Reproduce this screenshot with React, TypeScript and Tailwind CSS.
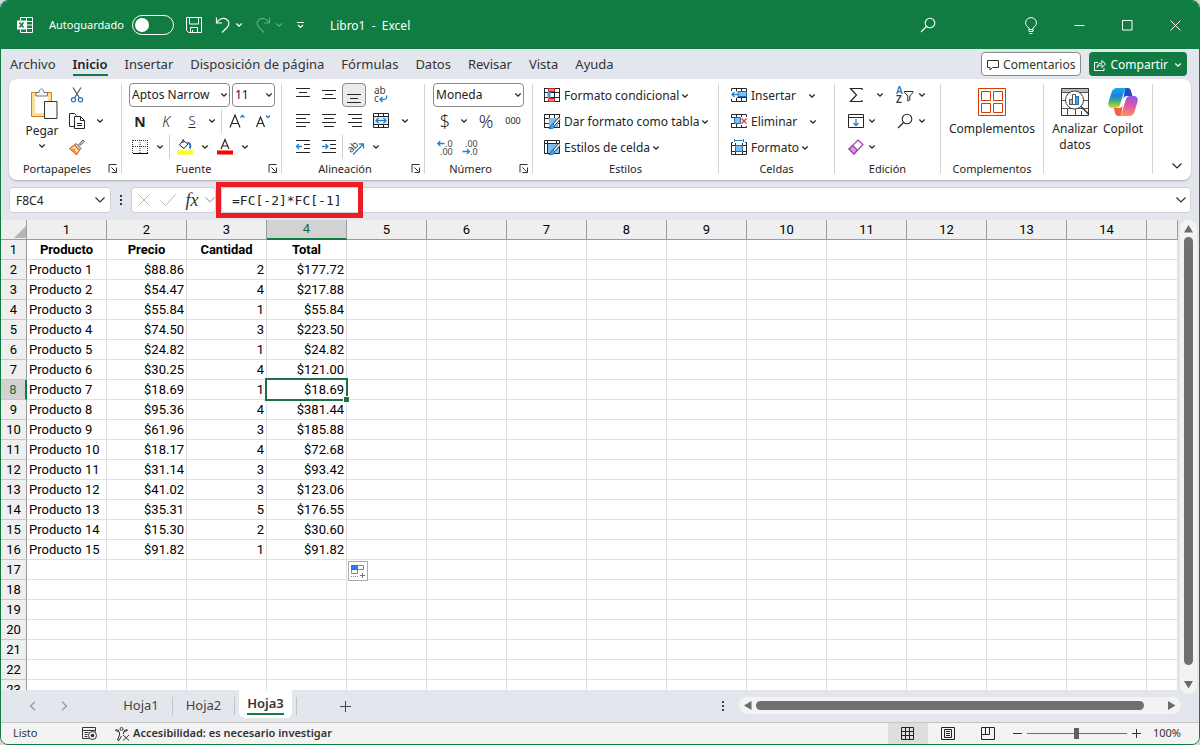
import { useState, type ReactNode } from 'react';

const TABS = ['Archivo', 'Inicio', 'Insertar', 'Disposición de página', 'Fórmulas', 'Datos', 'Revisar', 'Vista', 'Ayuda'];

const HEADERS = ['Producto', 'Precio', 'Cantidad', 'Total'];

const PRODUCTS: ReadonlyArray<ReadonlyArray<string>> = [
  ['$88.86', '2', '$177.72'],
  ['$54.47', '4', '$217.88'],
  ['$55.84', '1', '$55.84'],
  ['$74.50', '3', '$223.50'],
  ['$24.82', '1', '$24.82'],
  ['$30.25', '4', '$121.00'],
  ['$18.69', '1', '$18.69'],
  ['$95.36', '4', '$381.44'],
  ['$61.96', '3', '$185.88'],
  ['$18.17', '4', '$72.68'],
  ['$31.14', '3', '$93.42'],
  ['$41.02', '3', '$123.06'],
  ['$35.31', '5', '$176.55'],
  ['$15.30', '2', '$30.60'],
  ['$91.82', '1', '$91.82'],
];

const ROW_COUNT = 23;
const COL_COUNT = 15;
const ACTIVE = { row: 8, col: 4 };

/* ---------- icons ---------- */

interface SvgProps {
  size?: number;
  w?: number;
  h?: number;
  className?: string;
  children: ReactNode;
}

function Svg({ size = 16, w, h, className = '', children }: SvgProps) {
  const width = w ?? size;
  const height = h ?? size;
  return (
    <svg
      width={width}
      height={height}
      viewBox={`0 0 ${width} ${height}`}
      fill="none"
      stroke="currentColor"
      className={`shrink-0 overflow-visible ${className}`}
      aria-hidden="true"
    >
      {children}
    </svg>
  );
}

function Chevron({ className = '' }: { className?: string }) {
  return (
    <Svg w={8} h={6} className={className}>
      <path d="M1.3 1.5 4 4.2 6.7 1.5" strokeWidth="1.3" />
    </Svg>
  );
}

function BigChevron({ className = '' }: { className?: string }) {
  return (
    <Svg w={12} h={8} className={className}>
      <path d="M1.5 1.5 6 6l4.5-4.5" strokeWidth="1.2" />
    </Svg>
  );
}

function Lines({ rows }: { rows: ReadonlyArray<[number, number, number]> }) {
  return (
    <Svg>
      {rows.map(([x1, x2, y]) => (
        <path key={y} d={`M${x1} ${y + 0.5}H${x2}`} />
      ))}
    </Svg>
  );
}

const AlignTop = () => <Lines rows={[[1, 15, 1], [4, 12, 5], [1, 15, 9]]} />;
const AlignMiddle = () => <Lines rows={[[1, 15, 3], [4, 12, 7], [1, 15, 11]]} />;
const AlignBottom = () => <Lines rows={[[1, 15, 7], [4, 12, 11], [1, 15, 15]]} />;
const AlignLeft = () => <Lines rows={[[1, 15, 1], [1, 11, 5], [1, 15, 9], [1, 11, 13]]} />;
const AlignCenter = () => <Lines rows={[[1, 15, 1], [3, 13, 5], [1, 15, 9], [3, 13, 13]]} />;
const AlignRight = () => <Lines rows={[[1, 15, 1], [5, 15, 5], [1, 15, 9], [5, 15, 13]]} />;

function Indent({ inward = false }: { inward?: boolean }) {
  return (
    <Svg>
      <path d="M1 1.5h14M9 5.5h6M9 9.5h6M1 13.5h14" />
      <path d={inward ? 'M1 7.5h6M4.5 5 7 7.5 4.5 10' : 'M7 7.5H1.5M4 5 1.5 7.5 4 10'} stroke="#1e88d2" strokeWidth="1.3" />
    </Svg>
  );
}

function WrapText() {
  return (
    <Svg w={16} h={18}>
      <text x="1" y="8" fontSize="10" fill="#444" stroke="none" fontFamily="Noto Sans, sans-serif">ab</text>
      <text x="1" y="16" fontSize="10" fill="#444" stroke="none" fontFamily="Noto Sans, sans-serif">c</text>
      <path d="M13.5 9.5c1 3-1 4-3 4H7M9.5 11 7 13.5 9.5 16" stroke="#1e88d2" strokeWidth="1.4" />
    </Svg>
  );
}

function MergeCells() {
  return (
    <Svg>
      <path d="M.5.5h15v14H.5zM5.5.5v3M10.5.5v3M5.5 11.5v3M10.5 11.5v3M.5 3.5h15M.5 11.5h15" />
      <path d="M1 4h14v7H1z" fill="#d9ecfa" stroke="none" />
      <path d="M3 7.5h10M5.5 5 3 7.5 5.5 10M10.5 5 13 7.5 10.5 10" stroke="#1e78c8" strokeWidth="1.2" />
    </Svg>
  );
}

function Orientation() {
  return (
    <Svg w={18} h={16}>
      <text x="0" y="11" fontSize="10" fill="#444" stroke="none" fontFamily="Noto Sans, sans-serif" transform="rotate(-45 6 8)">ab</text>
      <path d="M6 15.5 16 5.5M12 5h4.5v4.5" stroke="#1e88d2" strokeWidth="1.3" />
    </Svg>
  );
}

function Decimals({ more = false }: { more?: boolean }) {
  return (
    <Svg w={17} h={17}>
      <text x={more ? 8 : 3} y="8" fontSize="9" fill="#444" stroke="none" fontFamily="Noto Sans, sans-serif">{more ? '.0' : '.00'}</text>
      <text x={more ? 3 : 8} y="16" fontSize="9" fill="#444" stroke="none" fontFamily="Noto Sans, sans-serif">{more ? '.00' : '.0'}</text>
      <path d={more ? 'M7.5 4.5H.8M3.3 2 .8 4.5 3.3 7' : 'M.5 12.5h7M5 10l2.5 2.5L5 15'} stroke="#1e88d2" strokeWidth="1.3" />
    </Svg>
  );
}

function Paste() {
  return (
    <Svg w={28} h={32} className="ml-1">
      <path d="M1.5 4.5h20v24h-20z" fill="#fff" stroke="#e07b12" />
      <path d="M3.5 6.5h16v20h-16z" fill="#fff" stroke="#f8dfa0" strokeWidth="3" />
      <path d="M6 8V4.5h3C9 2.5 10 1 11.500 1S14 2.500 14 4.500h3.500V8z" fill="#f6f6f6" stroke="#777" />
      <path d="M14.500 13.500h12.500v17H14.500z" fill="#fbfbfb" stroke="#333" />
    </Svg>
  );
}

function Cut() {
  return (
    <Svg>
      <path d="M4 .5 10.5 11M12 .5 5.5 11" stroke="#555" strokeWidth="1.2" />
      <circle cx="4.5" cy="12.8" r="2.1" stroke="#1e78c8" strokeWidth="1.2" />
      <circle cx="11.5" cy="12.8" r="2.1" stroke="#1e78c8" strokeWidth="1.2" />
    </Svg>
  );
}

function Copy() {
  return (
    <Svg>
      <path d="M5 13.5H.5V.5h5l2 2" />
      <path d="M5.5 3.5h6l4 4v8h-10z" fill="#fff" />
      <path d="M11.5 3.5v4h4M8 10.5h5M8 12.5h5" />
    </Svg>
  );
}

function Painter() {
  return (
    <Svg>
      <path d="m9.5 6 4.500-5 1.500 1.500-5 4.500" stroke="#555" fill="#ddd" />
      <path d="M7 4.500 12 9.500 10.500 11 5.500 6z" fill="#eee" stroke="#555" />
      <path d="M5.500 6 10.500 11 7.500 15.500 .8 9.500z" fill="#fbe3c8" stroke="#dd6b10" strokeWidth="1.2" />
      <path d="m3 9.500 4.500 4M5 11l1.500-1" stroke="#dd6b10" />
    </Svg>
  );
}

function Borders() {
  return (
    <Svg>
      <path d="M.5 1v13M15.5 1v13M8 1v13M1 1.5h14M1 7.5h14" strokeDasharray="1 1" stroke="#333" />
      <path d="M1 14.5h15" stroke="#000" strokeWidth="1.2" />
    </Svg>
  );
}

function Fill() {
  return (
    <Svg>
      <path d="M6 1.5 2.5 6 7 9.5l4-4.5zM6 4V0" />
      <path d="M10.5 3.5c2.500.5 3.500 3 2.500 6" stroke="#1e78c8" strokeWidth="2" />
      <path d="M0 11.5h16v4H0z" fill="#ff0" stroke="none" />
    </Svg>
  );
}

function FontColor() {
  return (
    <Svg>
      <path d="M4 10 8 .5 12 10M5.2 7h5.6" strokeWidth="1.2" />
      <path d="M0 11.5h16v4H0z" fill="#f00" stroke="none" />
    </Svg>
  );
}

function FontSize({ up = false }: { up?: boolean }) {
  return (
    <Svg>
      <path d={up ? 'M1 14.5 6 2l5 12.500M2.700 10.500h6.600' : 'M1.5 14 5.500 4l4 10M3 10.500h5'} strokeWidth="1.2" />
      <path d={up ? 'm11.5 4.5 2-2.2 2 2.2' : 'm11 2.5 2 2.2 2-2.2'} stroke="#1e78c8" strokeWidth="1.2" />
    </Svg>
  );
}

const GRID_16 = 'M.5 1v13.5M5.5 1v13.5M10.5 1v13.5M15.5 1v13.5M0 1.5h16M0 5.5h16M0 10.5h16M0 14.5h16';

function CondFormat() {
  return (
    <Svg>
      <path d={GRID_16} />
      <path d="M4.5 1.5h6v3h-6zM4.5 11.5h6v3h-6z" fill="#f58a8a" stroke="#d81f1f" />
      <path d="M3.5 5h3v6h-3z" fill="#3d9be0" stroke="none" />
    </Svg>
  );
}

function Brush() {
  return (
    <>
      <path d="m15 4-6 7 1.5 1.5L16 6.5" fill="#fff" stroke="#333" />
      <path d="M9 11c-3 .5-1.500 3-4 4.500 3 .5 5.500 0 5.500-3z" fill="#4ba3e3" stroke="#1e6fb8" />
    </>
  );
}

function TableFormat() {
  return (
    <Svg>
      <path d={GRID_16} />
      <path d="M5 5h9v9H5z" fill="#7fbdec" stroke="none" />
      <Brush />
    </Svg>
  );
}

function CellStyles() {
  return (
    <Svg>
      <path d="M.5 1.5h15v13H.5zM.5 4.5h15M3.5 1.5v13M12.5 1.5v3" />
      <path d="M4 5h11v9H4z" fill="#7fbdec" stroke="none" />
      <Brush />
    </Svg>
  );
}

function InsertCells() {
  return (
    <Svg>
      <path d="M.5 4V1.5h15v13H.5V12M5.5 1.5v3M10.5 1.5v13M5.5 11v3.5M6 10.5h9" />
      <path d="M7 4.5h8.5v5H7z" fill="#7fbdec" stroke="#1e6fb8" />
      <path d="M7 7.5H1M3.5 5 1 7.5 3.5 10" stroke="#1e88d2" strokeWidth="1.4" />
    </Svg>
  );
}

function DeleteCells() {
  return (
    <Svg>
      <path d="M15.5 4V1.5H.5V4M.5 11v3.5h15V13M5.5 1.5V4M10.5 1.5V4M5.5 11v3.5M10.5 12v2.5M0 4.5h4M0 10.5h4" />
      <path d="M3.5 4.5h6v6h-6z" fill="#7fbdec" stroke="#1e6fb8" />
      <path d="m10.5 5.5 5 5M15.5 5.5l-5 5" stroke="#e03a3a" strokeWidth="1.4" />
    </Svg>
  );
}

function FormatCells() {
  return (
    <Svg>
      <path d="M2 3.5H.5v12h15v-12H14M4.5 4v11.5M11.5 4v11.5M.5 6.5h15M.5 12.5h15" />
      <path d="M4.5 6.5h7v6h-7z" fill="#7fbdec" stroke="#1e6fb8" />
      <path d="M3.5 0v3M12.5 0v3M3.5 1.5h9" stroke="#1e88d2" />
    </Svg>
  );
}

function Sigma() {
  return (
    <Svg>
      <path d="M14 3V1.5H2.5l6 6.5-6 6.5H14V13" strokeWidth="1.2" />
    </Svg>
  );
}

function SortFilter() {
  return (
    <Svg w={18} h={18}>
      <text x="0" y="8" fontSize="10" fontWeight="600" fill="#1e78c8" stroke="none" fontFamily="Noto Sans, sans-serif">A</text>
      <text x="0" y="17" fontSize="10" fontWeight="600" fill="#333" stroke="none" fontFamily="Noto Sans, sans-serif">Z</text>
      <path d="M8.5 5.5H17v1L13.800 10v4l-2 1v-5L8.500 6.500z" />
    </Svg>
  );
}

function FillDown() {
  return (
    <Svg>
      <path d="M.5 1.5h15v13H.5zM.5 4.5h15" />
      <path d="M8 6v6.5M5.5 10 8 12.5l2.500-2.500" stroke="#1e88d2" strokeWidth="1.3" />
    </Svg>
  );
}

function Magnifier() {
  return (
    <Svg>
      <circle cx="10" cy="6" r="4.8" strokeWidth="1.1" />
      <path d="M6.5 9.5 1 15" strokeWidth="1.2" />
    </Svg>
  );
}

function Eraser() {
  return (
    <Svg>
      <path d="M10 1 15 5.500 6 15 1 10z" fill="#fff" stroke="#a23fb0" strokeWidth="1.2" />
      <path d="M4.500 6.500 9.500 11 6 15 1 10z" fill="#d79bdf" stroke="#a23fb0" strokeWidth="1.2" />
    </Svg>
  );
}

function AddIns() {
  return (
    <Svg size={28}>
      <path d="M.5.5h27v27H.5zM3.5 3.5h9v9h-9zM15.5 3.5h9v9h-9zM3.5 15.5h9v9h-9zM15.5 15.5h9v9h-9z" stroke="#d83b01" />
    </Svg>
  );
}

function Analyze() {
  return (
    <Svg size={28}>
      <path d="M.5.5h27v27H.5z" fill="#fafafa" stroke="#333" />
      <path d="M1 1h26v3H1z" fill="#bbb" stroke="none" />
      <path d="M.5 4.5h27M.5 12.5h5M22 12.5h5.5M.5 20.5h27M6.5 20.5v7M14.5 21v6.5M20.5 23v4.5" stroke="#555" />
      <circle cx="13.5" cy="12" r="9" fill="#fff" stroke="#444" />
      <path d="M8.5 11.5h3v5h-3z" fill="#bbb" stroke="#555" />
      <path d="M11.5 6.5h3v10h-3z" fill="#fff" stroke="#555" />
      <path d="M14.5 8.5h3v8h-3z" fill="#4ba3e3" stroke="#1e6fb8" />
      <path d="m20 18.5 8 8" stroke="#333" strokeWidth="1.5" />
    </Svg>
  );
}

function Copilot() {
  return (
    <Svg w={30} h={28}>
      <defs>
        <linearGradient id="cpA" x1="0" y1="0" x2="0" y2="1">
          <stop offset="0" stopColor="#1ba8f0" />
          <stop offset=".4" stopColor="#1d7fe0" />
          <stop offset=".65" stopColor="#3bb27a" />
          <stop offset="1" stopColor="#e8d21c" />
        </linearGradient>
        <linearGradient id="cpB" x1=".5" y1="0" x2=".3" y2="1">
          <stop offset="0" stopColor="#9a55e8" />
          <stop offset=".45" stopColor="#e055a8" />
          <stop offset="1" stopColor="#ff9a50" />
        </linearGradient>
      </defs>
      <path d="M17 0h3c1.500 0 2.500 1 3 3l1.500 5H19c-2 0-3 1-3.700 3z" fill="#1a4fc8" stroke="none" />
      <path d="M9 0h10.500c-2 0-2.800 1.500-3.400 3.500L12 17c-.7 2-1.800 3-4 3H4.500C1 20-.5 17.500.5 14L3.500 4.500C4.500 1.500 6 0 9 0z" fill="url(#cpA)" stroke="none" />
      <path d="M13 28h-3c-1.500 0-2.500-1-3-3l-1.200-5H11c2 0 3-1 3.700-3z" fill="#f0604a" stroke="none" />
      <path d="M21 28H10.500c2 0 2.800-1.500 3.400-3.500L18 11c.7-2 1.800-3 4-3h3.500c3.500 0 5 2.500 4 6l-3 9.500c-1 3-2.500 4.500-5.500 4.500z" fill="url(#cpB)" stroke="none" />
    </Svg>
  );
}

function ExcelMark() {
  return (
    <Svg>
      <path d="M3.5 3.5v-3h12v15h-12v-3M9.5.5v15M9 4.5h6.5M9 8h6.5M9 11.5h6.5" />
      <path d="M0 3.5h9v9H0z" fill="#fff" stroke="none" />
      <path d="m2.5 5.5 4 5M6.5 5.5l-4 5" stroke="#107c41" strokeWidth="1.5" />
    </Svg>
  );
}

function Save() {
  return (
    <Svg>
      <path d="M.5.5h15v15h-13l-2-2zM3.5.5V7h9V.5M4.5 15.5v-5h7v5M6.5 13v2.5" />
    </Svg>
  );
}

function Undo({ flip = false }: { flip?: boolean }) {
  return (
    <Svg className={flip ? '-scale-x-100' : ''}>
      <path d="M1.5.5V6H7M1.5 6C4 2 8 0 11.5 2.2c3 2 3 5.500 1 7.800L7 15.500" strokeWidth="1.2" />
    </Svg>
  );
}

function Launcher() {
  return (
    <Svg size={9}>
      <path d="M1 8.5V.5h7.5M3.5 3.5l4 4M8.5 3.5v5h-5" stroke="#333" />
    </Svg>
  );
}

/* ---------- ribbon parts ---------- */

interface IconBtnProps {
  label: string;
  className?: string;
  children: ReactNode;
}

function IconBtn({ label, className = 'w-[26px]', children }: IconBtnProps) {
  return (
    <button type="button" aria-label={label} className={`flex h-6 shrink-0 items-center justify-center ${className}`}>
      {children}
    </button>
  );
}

function Drop({ label, className = '' }: { label: string; className?: string }) {
  return (
    <button type="button" aria-label={label} className={`flex h-6 w-[14px] shrink-0 items-center justify-center ${className}`}>
      <Chevron />
    </button>
  );
}

function Divider() {
  return <span className="mx-[2px] h-6 w-px bg-[#d0d0d0]" />;
}

function Row({ children, className = '' }: { children: ReactNode; className?: string }) {
  return <div className={`flex h-[26px] items-center ${className}`}>{children}</div>;
}

interface GroupProps {
  title?: string;
  width: string;
  launcher?: boolean;
  children: ReactNode;
}

function Group({ title, width, launcher, children }: GroupProps) {
  return (
    <section aria-label={title} className={`relative flex shrink-0 flex-col border-r border-[#d4d4d4] ${width}`}>
      <div className="h-[77px] shrink-0">{children}</div>
      {title && <div className={`text-center text-[11px] leading-4 ${launcher ? 'pr-4' : ''}`}>{title}</div>}
      {launcher && (
        <button type="button" aria-label={`Opciones de ${title}`} className="absolute right-[3px] bottom-0 flex h-3 w-3 items-center justify-center">
          <Launcher />
        </button>
      )}
    </section>
  );
}

function Combo({ label, value, width }: { label: string; value: string; width: string }) {
  return (
    <div className={`relative flex h-6 items-center ${width}`}>
      <select aria-label={label} className="h-6 w-full appearance-none rounded border border-[#8a8a8a] bg-white pl-[2px] text-[12px] leading-5 text-[#222]">
        <option>{value}</option>
      </select>
      <Chevron className="pointer-events-none absolute right-[2px]" />
    </div>
  );
}

function MenuBtn({ icon, label, gap = 'gap-[2px]' }: { icon: ReactNode; label: string; gap?: string }) {
  return (
    <button type="button" className="flex h-6 items-center gap-1 text-[12px] whitespace-nowrap">
      {icon}
      <span className={`flex items-center pt-px ${gap}`}>
        {label}
        <Chevron />
      </span>
    </button>
  );
}

function Ribbon() {
  return (
    <div className="mx-2 flex h-[101px] shrink-0 overflow-hidden rounded-lg bg-white pt-[5px] pb-[6px] text-[#262626] shadow-[0_1px_2px_rgba(0,0,0,0.25)]">
      <Group title="Portapapeles" width="w-[113px]" launcher>
        <div className="flex pl-[10px]">
          <button type="button" className="flex w-[46px] flex-col items-center pt-1 text-[12px]">
            <Paste />
            <span className="pt-px leading-5">Pegar</span>
            <Chevron className="mt-[2px]" />
          </button>
          <div className="-mt-[2px]">
            <Row><IconBtn label="Cortar" className="w-6"><Cut /></IconBtn></Row>
            <Row><IconBtn label="Copiar" className="w-6"><Copy /></IconBtn><Drop label="Opciones de copia" className="ml-1" /></Row>
            <Row><IconBtn label="Copiar formato" className="w-6"><Painter /></IconBtn></Row>
          </div>
        </div>
      </Group>

      <Group title="Fuente" width="w-[160px]" launcher>
        <div className="-mt-[2px] pl-[5px]">
          <Row className="gap-[2px] pl-[2px]">
            <Combo label="Fuente" value="Aptos Narrow" width="w-[101px]" />
            <Combo label="Tamaño de fuente" value="11" width="w-[43px]" />
          </Row>
          <Row>
            <IconBtn label="Negrita"><span className="text-[14px] font-bold">N</span></IconBtn>
            <IconBtn label="Cursiva"><span className="text-[14px] font-light italic">K</span></IconBtn>
            <IconBtn label="Subrayado"><span className="text-[13px] font-light underline underline-offset-2">S</span></IconBtn>
            <Drop label="Estilos de subrayado" />
            <Divider />
            <IconBtn label="Aumentar tamaño"><FontSize up /></IconBtn>
            <IconBtn label="Disminuir tamaño"><FontSize /></IconBtn>
          </Row>
          <Row>
            <IconBtn label="Bordes"><Borders /></IconBtn>
            <Drop label="Más bordes" />
            <Divider />
            <IconBtn label="Color de relleno"><Fill /></IconBtn>
            <Drop label="Más colores de relleno" />
            <IconBtn label="Color de fuente"><FontColor /></IconBtn>
            <Drop label="Más colores de fuente" />
          </Row>
        </div>
      </Group>

      <Group title="Alineación" width="w-[143px]" launcher>
        <div className="-mt-[2px] pl-2">
          <Row>
            <IconBtn label="Alinear arriba"><AlignTop /></IconBtn>
            <IconBtn label="Alinear en el medio"><AlignMiddle /></IconBtn>
            <IconBtn label="Alinear abajo" className="w-6 rounded border border-[#8a8a8a] bg-[#ebebeb]"><AlignBottom /></IconBtn>
            <IconBtn label="Ajustar texto" className="w-[30px]"><WrapText /></IconBtn>
          </Row>
          <Row>
            <IconBtn label="Alinear a la izquierda"><AlignLeft /></IconBtn>
            <IconBtn label="Centrar"><AlignCenter /></IconBtn>
            <IconBtn label="Alinear a la derecha"><AlignRight /></IconBtn>
            <IconBtn label="Combinar y centrar"><MergeCells /></IconBtn>
            <Drop label="Opciones de combinar" className="ml-1" />
          </Row>
          <Row>
            <IconBtn label="Disminuir sangría"><Indent /></IconBtn>
            <IconBtn label="Aumentar sangría"><Indent inward /></IconBtn>
            <span className="h-6 w-px bg-[#d0d0d0]" />
            <IconBtn label="Orientación"><Orientation /></IconBtn>
            <Drop label="Opciones de orientación" />
          </Row>
        </div>
      </Group>

      <Group title="Número" width="w-[108px]" launcher>
        <div className="-mt-[2px] pl-2">
          <Row><Combo label="Formato de número" value="Moneda" width="w-[91px]" /></Row>
          <Row>
            <IconBtn label="Formato de contabilidad" className="w-6"><span className="text-[18px] font-light">$</span></IconBtn>
            <Drop label="Más monedas" />
            <IconBtn label="Porcentaje" className="w-[30px]"><span className="text-[18px] font-light">%</span></IconBtn>
            <IconBtn label="Estilo millares" className="w-6"><span className="text-[9px]">000</span></IconBtn>
          </Row>
          <Row>
            <IconBtn label="Aumentar decimales" className="w-6"><Decimals more /></IconBtn>
            <IconBtn label="Disminuir decimales"><Decimals /></IconBtn>
          </Row>
        </div>
      </Group>

      <Group title="Estilos" width="w-[186px]">
        <div className="-mt-[2px] pl-[11px]">
          <Row><MenuBtn icon={<CondFormat />} label="Formato condicional" /></Row>
          <Row><MenuBtn icon={<TableFormat />} label="Dar formato como tabla" /></Row>
          <Row><MenuBtn icon={<CellStyles />} label="Estilos de celda" /></Row>
        </div>
      </Group>

      <Group title="Celdas" width="w-[116px]">
        <div className="-mt-[2px] pl-3">
          <Row><MenuBtn icon={<InsertCells />} label="Insertar" gap="gap-3" /></Row>
          <Row><MenuBtn icon={<DeleteCells />} label="Eliminar" gap="gap-3" /></Row>
          <Row><MenuBtn icon={<FormatCells />} label="Formato" /></Row>
        </div>
      </Group>

      <Group title="Edición" width="w-[106px]">
        <div className="-mt-[2px] pl-2">
          <Row>
            <IconBtn label="Autosuma"><Sigma /></IconBtn>
            <Drop label="Más funciones" className="ml-1" />
            <IconBtn label="Ordenar y filtrar" className="ml-2 w-5"><SortFilter /></IconBtn>
            <Drop label="Opciones de orden" />
          </Row>
          <Row>
            <IconBtn label="Rellenar"><FillDown /></IconBtn>
            <Drop label="Opciones de relleno" className="-ml-1" />
            <IconBtn label="Buscar y seleccionar" className="ml-4 w-5"><Magnifier /></IconBtn>
            <Drop label="Opciones de búsqueda" />
          </Row>
          <Row>
            <IconBtn label="Borrar"><Eraser /></IconBtn>
            <Drop label="Opciones de borrado" className="-ml-1" />
          </Row>
        </div>
      </Group>

      <Group title="Complementos" width="w-[103px]">
        <button type="button" className="flex w-full flex-col items-center gap-[5px] pt-1 text-[12px] leading-4">
          <AddIns />
          Complementos
        </button>
      </Group>

      <Group width="w-[109px]">
        <div className="flex items-start pl-[7px]">
          <button type="button" className="flex w-12 flex-col items-center gap-[5px] pt-1 text-[12px] leading-4">
            <Analyze />
            Analizar datos
          </button>
          <button type="button" className="flex w-12 flex-col items-center gap-[5px] pt-1 text-[12px] leading-4">
            <Copilot />
            Copilot
          </button>
        </div>
      </Group>

      <button type="button" aria-label="Contraer cinta" className="mr-2 ml-auto self-end pb-1">
        <BigChevron />
      </button>
    </div>
  );
}

/* ---------- window chrome ---------- */

function TitleBar() {
  return (
    <header className="flex h-12 shrink-0 items-center bg-[#107c41] pl-4 text-[12px] text-white">
      <ExcelMark />
      <label className="ml-4 flex items-center gap-2">
        <span className="text-[11px]">Autoguardado</span>
        <input type="checkbox" role="switch" className="peer sr-only" />
        <span className="flex h-5 w-[42px] items-center rounded-full border border-white px-[2px] peer-checked:justify-end">
          <span className="h-[14px] w-[14px] rounded-full bg-white" />
        </span>
      </label>
      <button type="button" aria-label="Guardar" className="ml-3"><Save /></button>
      <button type="button" aria-label="Deshacer" className="ml-[13px] flex items-center gap-1"><Undo /><Chevron /></button>
      <button type="button" aria-label="Rehacer" disabled className="ml-3 flex items-center gap-1 text-[#5aa981]"><Undo flip /><Chevron /></button>
      <button type="button" aria-label="Personalizar barra" className="ml-[13px]">
        <Svg w={9} h={8}>
          <path d="M1 1.5h7M2 4l2.5 2.5L7 4" strokeWidth="1.2" />
        </Svg>
      </button>
      <span className="ml-[25px] pt-[2px] whitespace-pre">Libro1  -  Excel</span>
      <div className="ml-auto flex items-center">
        <button type="button" aria-label="Buscar" className="mr-[55px] flex w-12 justify-center"><Magnifier /></button>
        <button type="button" aria-label="Sugerencias" className="flex w-12 items-center justify-center">
          <Svg w={12} h={17}>
            <path d="M4 12.5V11C2 9.5.6 8 .6 5.800a5.400 5.200 0 0 1 10.800 0C11.400 8 10 9.500 8 11v1.500zM4 12.500v2h4v-2M4.500 16.500h3" />
          </Svg>
        </button>
        <button type="button" aria-label="Minimizar" className="flex w-12 items-center justify-center">
          <Svg size={11}><path d="M.5 5.5h10" /></Svg>
        </button>
        <button type="button" aria-label="Maximizar" className="flex w-12 items-center justify-center">
          <Svg size={11}><path d="M.5.5H10V10H.5z" /></Svg>
        </button>
        <button type="button" aria-label="Cerrar" className="flex w-12 items-center justify-center">
          <Svg size={11}><path d="m.5.5 10 10M10.5.5l-10 10" /></Svg>
        </button>
      </div>
    </header>
  );
}

function TabBar() {
  return (
    <nav className="flex h-[30px] shrink-0 items-center pr-3 pl-[9px] text-[12px] text-[#333]">
      <div className="flex gap-[17px] text-[13px]">
        {TABS.map((tab) => (
          <button
            key={tab}
            type="button"
            className={
              tab === 'Inicio'
                ? 'border-b-2 border-[#107c41] pt-[2px] leading-5 font-semibold text-[#222]'
                : 'border-b-2 border-transparent pt-[2px] leading-5'
            }
          >
            {tab}
          </button>
        ))}
      </div>
      <div className="ml-auto flex gap-2">
        <button type="button" className="flex h-6 items-center gap-1 rounded border border-[#8a8a8a] bg-white px-[5px] pt-px">
          <Svg size={12}><path d="M.5 1.5h11v7h-6L3 11V8.5H.5z" /></Svg>
          Comentarios
        </button>
        <button type="button" className="flex h-6 items-center gap-1 rounded bg-[#107c41] px-[5px] pt-px text-white">
          <Svg size={12}>
            <path d="M4 3.5H.5v8H10V9M3 8.500c.5-3 2-4.500 5-4.500V1.500L11.500 5 8 8.500V6C6 6 4.500 6.500 3 8.500z" />
          </Svg>
          Compartir
          <Chevron className="ml-[2px]" />
        </button>
      </div>
    </nav>
  );
}

function FormulaBar() {
  const [formula, setFormula] = useState('=FC[-2]*FC[-1]');
  return (
    <div className="mt-[7px] flex h-[26px] shrink-0 items-center px-2">
      <div className="flex h-[26px] w-[102px] items-center rounded border border-[#d0d0d0] bg-white pr-1">
        <input aria-label="Cuadro de nombres" defaultValue="F8C4" className="w-full min-w-0 bg-transparent pt-px pl-[6px] text-[12px] text-[#222] outline-none" />
        <BigChevron />
      </div>
      <Svg w={20} h={12}><path d="M10 1v2M10 5v2M10 9v2" strokeWidth="2" /></Svg>
      <div className="flex h-[26px] w-[85px] items-center rounded border border-[#d0d0d0] bg-white text-[#b5b5b5]">
        <IconBtn label="Cancelar" className="w-6"><Svg size={12}><path d="m.5.5 11 11M11.5.5l-11 11" /></Svg></IconBtn>
        <IconBtn label="Introducir" className="w-6"><Svg w={16} h={12}><path d="m.5 6.5 5 5 10-11" /></Svg></IconBtn>
        <IconBtn label="Insertar función" className="w-6">
          <span className="font-['Liberation_Serif',serif] text-[18px] text-[#333] italic">fx</span>
        </IconBtn>
        <BigChevron />
      </div>
      <div className="relative ml-[5px] flex h-[26px] flex-1 items-center rounded border border-[#d0d0d0] bg-white pr-[3px]">
        <input
          aria-label="Barra de fórmulas"
          value={formula}
          onChange={(e) => setFormula(e.target.value)}
          className="w-full bg-transparent pt-px pl-[10px] font-['DejaVu_Sans_Mono',monospace] text-[13px] text-[#222] outline-none"
        />
        <BigChevron />
        <span className="pointer-events-none absolute -top-[6px] -left-[6px] h-9 w-[147px] border-[5px] border-[#ed1c24]" />
      </div>
    </div>
  );
}

/* ---------- sheet ---------- */

function cellText(row: number, col: number): string {
  if (row === 1) return HEADERS[col - 1] ?? '';
  const product = PRODUCTS[row - 2];
  if (!product) return '';
  return col === 1 ? `Producto ${row - 1}` : product[col - 2] ?? '';
}

function cellAlign(row: number, col: number): string {
  if (row === 1) return 'text-center font-bold';
  return col === 1 ? 'text-left' : 'text-right';
}

function Sheet() {
  const rows = Array.from({ length: ROW_COUNT }, (_, i) => i + 1);
  const cols = Array.from({ length: COL_COUNT }, (_, i) => i + 1);
  return (
    <div className="min-w-0 flex-1 overflow-hidden bg-white">
      <table className="w-full table-fixed border-separate border-spacing-0 font-[Roboto,sans-serif] text-[13px] leading-[18px] text-black">
        <colgroup>
          <col className="w-[26px]" />
          {cols.map((c) => (
            <col key={c} className={c < COL_COUNT ? 'w-20' : ''} />
          ))}
        </colgroup>
        <thead>
          <tr className="h-5">
            <th className="h-5 border-r border-b border-[#9b9b9b] bg-[#efefef] p-0">
              <Svg size={12} className="mt-1 ml-auto"><path d="M12 0v12H0z" fill="#b5b5b5" stroke="none" /></Svg>
            </th>
            {cols.map((c) => (
              <th
                key={c}
                scope="col"
                className={
                  c === ACTIVE.col
                    ? 'h-5 border-r border-b-2 border-r-[#9b9b9b] border-b-[#107c41] bg-[#d2d2d2] p-0 font-normal text-[#0f703b]'
                    : 'h-5 border-r border-b border-[#9b9b9b] bg-[#efefef] p-0 pt-px font-normal'
                }
              >
                {c < COL_COUNT ? c : ''}
              </th>
            ))}
          </tr>
        </thead>
        <tbody>
          {rows.map((r) => (
            <tr key={r} className="h-5">
              <th
                scope="row"
                className={
                  r === ACTIVE.row
                    ? 'h-5 border-r-2 border-b border-r-[#107c41] border-b-[#c8c8c8] bg-[#d2d2d2] p-0 pt-px font-normal text-[#0f703b]'
                    : 'h-5 border-r border-b border-r-[#9b9b9b] border-b-[#c8c8c8] bg-[#efefef] p-0 pt-px font-normal'
                }
              >
                {r}
              </th>
              {cols.map((c) => (
                <td key={c} className={`relative h-5 border-r border-b border-[#e0e0e0] px-[2px] pt-px pb-0 whitespace-nowrap ${cellAlign(r, c)}`}>
                  {cellText(r, c)}
                  {r === ACTIVE.row && c === ACTIVE.col && (
                    <span className="absolute -inset-[2px] z-10 border-2 border-[#1e7145]">
                      <span className="absolute -right-[3px] -bottom-[3px] h-[6px] w-[6px] border-t border-l border-white bg-[#1e7145]" />
                    </span>
                  )}
                  {r === 17 && c === 5 && (
                    <button type="button" aria-label="Opciones de autorrelleno" className="absolute top-px left-px z-10 flex h-5 w-5 items-center justify-center border border-[#ababab] bg-white">
                      <Svg size={14}>
                        <path d="M6.5 1.5h6v4h-6zM.5 5.5h6v4h-6z" stroke="#888" />
                        <path d="M.5 1.5h6v4h-6z" fill="#3b78f0" stroke="#666" />
                        <path d="M0 12.5h8" strokeDasharray="1 1" stroke="#888" />
                        <path d="M9 11.5h5M11.5 9v5" stroke="#777" />
                      </Svg>
                    </button>
                  )}
                </td>
              ))}
            </tr>
          ))}
        </tbody>
      </table>
    </div>
  );
}

function VerticalScroll() {
  return (
    <div className="mx-[2px] -mb-1 flex w-[17px] shrink-0 flex-col items-center rounded-full bg-[#f3f3f3] py-[5px] text-[#6b6b6b]">
      <button type="button" aria-label="Desplazar arriba"><Svg w={9} h={8}><path d="M4.5 0 9 7.5H0z" fill="currentColor" stroke="none" /></Svg></button>
      <div className="mt-1 mb-4 w-[9px] flex-1 rounded-full bg-[#707070]" />
      <button type="button" aria-label="Desplazar abajo"><Svg w={9} h={8}><path d="M4.5 7.5 9 0H0z" fill="currentColor" stroke="none" /></Svg></button>
    </div>
  );
}

function SheetTabs() {
  return (
    <div className="flex h-8 shrink-0 items-start pr-[18px] text-[13px] text-[#444]">
      <button type="button" aria-label="Hoja anterior" className="ml-[15px] flex h-8 w-8 items-center justify-center text-[#9a9a9a]">
        <Svg w={7} h={10}><path d="M6 .8 1.5 5 6 9.2" strokeWidth="1.3" /></Svg>
      </button>
      <button type="button" aria-label="Hoja siguiente" className="flex h-8 w-8 items-center justify-center text-[#9a9a9a]">
        <Svg w={7} h={10}><path d="M1 .8 5.5 5 1 9.2" strokeWidth="1.3" /></Svg>
      </button>
      <button type="button" className="ml-[30px] h-8 w-[62px]">Hoja1</button>
      <span className="mt-[7px] h-[18px] w-px bg-[#c4c4c4]" />
      <button type="button" className="h-8 w-[61px]">Hoja2</button>
      <span className="mt-[7px] h-[18px] w-px bg-[#c4c4c4]" />
      <button type="button" className="mx-1 flex h-7 w-[53px] items-start justify-center rounded-b-md bg-white pt-[3px] font-semibold text-[#333]">
        <span className="border-b-2 border-[#107c41] leading-5">Hoja3</span>
      </button>
      <span className="mt-[7px] h-[18px] w-px bg-[#c4c4c4]" />
      <button type="button" aria-label="Hoja nueva" className="ml-8 flex h-8 w-8 items-center justify-center">
        <Svg size={11}><path d="M0 5.5h11M5.5 0v11" /></Svg>
      </button>
      <div className="ml-auto flex h-[31px] w-[468px] items-center">
        <Svg w={20} h={12} className="mr-[6px]"><path d="M10 1v2M10 5v2M10 9v2" strokeWidth="2" /></Svg>
        <div className="flex h-[17px] flex-1 items-center rounded-full bg-[#f3f3f3] px-[5px] text-[#6b6b6b]">
          <button type="button" aria-label="Desplazar a la izquierda"><Svg w={8} h={9}><path d="M0 4.5 7.5 0v9z" fill="currentColor" stroke="none" /></Svg></button>
          <div className="mr-6 ml-1 h-[9px] flex-1 rounded-full bg-[#707070]" />
          <button type="button" aria-label="Desplazar a la derecha"><Svg w={8} h={9}><path d="M7.5 4.5 0 0v9z" fill="currentColor" stroke="none" /></Svg></button>
        </div>
      </div>
    </div>
  );
}

function StatusBar() {
  return (
    <footer className="flex h-[22px] shrink-0 items-center border-t border-[#c4c4c4] bg-[#f3f3f3] pl-3 text-[11px] text-[#333]">
      <span className="w-[69px]">Listo</span>
      <button type="button" aria-label="Grabar macro">
        <Svg w={15} h={13}>
          <path d="M7 11.5H.5V.5h13v4M.5 3.5h13M2.5 5.5h4M2.5 7.5h3M2.5 9.5h3" />
          <circle cx="10.5" cy="8.5" r="4" />
          <circle cx="10.5" cy="8.5" r="1.8" fill="currentColor" stroke="none" />
        </Svg>
      </button>
      <button type="button" className="ml-[18px] flex items-center gap-[3px] font-semibold">
        <Svg w={15} h={14}>
          <circle cx="6.5" cy="2" r="1.5" />
          <path d="M.5 3.5 4.500 5v3l-2 5 1.500.5L6.500 9M12.500 3.500 8.500 5v2M.5 3.500l.5-1 3 1.200M12.500 3.500l-.5-1-3 1.200M8 8l6 5.500M14 8l-6 5.500" />
        </Svg>
        Accesibilidad: es necesario investigar
      </button>
      <div className="ml-auto flex h-full items-center">
        <button type="button" aria-label="Normal" className="flex h-full w-10 items-center justify-center bg-[#dedede]">
          <Svg size={13}><path d="M.5.5h12v12H.5zM4.5.5v12M8.5.5v12M.5 4.5h12M.5 8.5h12" stroke="#222" /></Svg>
        </button>
        <button type="button" aria-label="Diseño de página" className="flex h-full w-10 items-center justify-center">
          <Svg w={14} h={13}><path d="M.5.5h13v12H.5zM3.5 2.5h7v8h-7zM5 4.5h4M5 6.5h4M5 8.5h4" stroke="#222" /></Svg>
        </button>
        <button type="button" aria-label="Vista previa de salto de página" className="flex h-full w-10 items-center justify-center">
          <Svg w={14} h={13}><path d="M.5.5h13v12H.5zM4.5.5v7M.5 7.5h8V.5" stroke="#222" /></Svg>
        </button>
        <button type="button" aria-label="Alejar" className="ml-[5px]"><Svg size={9}><path d="M0 4.5h9" /></Svg></button>
        <input
          type="range"
          aria-label="Zoom"
          min={0}
          max={200}
          defaultValue={100}
          className="mx-[5px] h-3 w-[100px] appearance-none bg-[linear-gradient(#707070,#707070)] bg-[length:100%_1px] bg-center bg-no-repeat [&::-webkit-slider-thumb]:h-[11px] [&::-webkit-slider-thumb]:w-[5px] [&::-webkit-slider-thumb]:appearance-none [&::-webkit-slider-thumb]:bg-[#606060]"
        />
        <button type="button" aria-label="Acercar"><Svg size={9}><path d="M0 4.5h9M4.5 0v9" /></Svg></button>
        <span className="mr-[18px] ml-3">100%</span>
      </div>
    </footer>
  );
}

export default function App() {
  return (
    <div className="h-screen bg-[#d5d9d7]">
      <div className="flex h-full flex-col overflow-hidden rounded-lg border border-[#107c41] bg-[#e4e6ee] font-['Noto_Sans',sans-serif] text-[#333]">
        <TitleBar />
        <TabBar />
        <Ribbon />
        <FormulaBar />
        <main className="mt-[7px] flex min-h-0 flex-1">
          <Sheet />
          <VerticalScroll />
        </main>
        <SheetTabs />
        <StatusBar />
      </div>
    </div>
  );
}
